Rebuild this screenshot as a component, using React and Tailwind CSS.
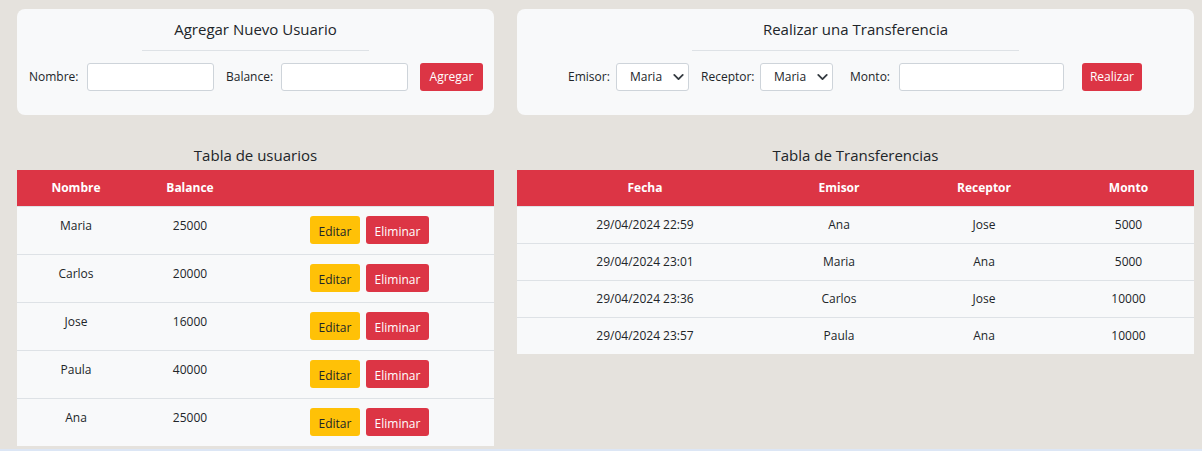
import { ChevronDown } from "lucide-react";

const usuarios = [
  { nombre: "Maria", balance: 25000 },
  { nombre: "Carlos", balance: 20000 },
  { nombre: "Jose", balance: 16000 },
  { nombre: "Paula", balance: 40000 },
  { nombre: "Ana", balance: 25000 },
];

const transferencias = [
  { fecha: "29/04/2024 22:59", emisor: "Ana", receptor: "Jose", monto: 5000 },
  { fecha: "29/04/2024 23:01", emisor: "Maria", receptor: "Ana", monto: 5000 },
  { fecha: "29/04/2024 23:36", emisor: "Carlos", receptor: "Jose", monto: 10000 },
  { fecha: "29/04/2024 23:57", emisor: "Paula", receptor: "Ana", monto: 10000 },
];

function Card({ title, children }) {
  return (
    <div className="h-[106px] rounded-lg bg-[#f8f9fa] px-3 pt-[11px]">
      <h5 className="text-center text-[15px] font-medium leading-[19px]">{title}</h5>
      <div className="mx-auto mt-[11px] h-px w-1/2 bg-[#dee2e6]" />
      <div className="mt-3 flex items-center">{children}</div>
    </div>
  );
}

function Select() {
  return (
    <div className="relative h-[28px] w-[73px] shrink-0">
      <select className="h-full w-full appearance-none rounded-[3px] border border-[#ced4da] bg-white pl-[13px] text-[12px] text-[#212529] outline-none">
        <option>Maria</option>
      </select>
      <ChevronDown
        size={17}
        strokeWidth={2.6}
        className="pointer-events-none absolute right-[2px] top-1/2 -translate-y-1/2 text-[#343a40]"
      />
    </div>
  );
}

export default function App() {
  return (
    <div className="h-[451px] bg-[#dce6f5]">
      <div className="h-[449px] bg-[#e5e2dd] font-['Open_Sans',sans-serif] text-[12px] text-[#212529]">
        <div className="flex gap-[23px] pl-[17px] pt-[9px]">
          {/* left column */}
          <div className="w-[477px]">
            <Card title="Agregar Nuevo Usuario">
              <label className="w-[58px] shrink-0">Nombre:</label>
              <input className="h-[28px] w-[127px] shrink-0 rounded-[3px] border border-[#ced4da] bg-white" />
              <label className="ml-3 w-[55px] shrink-0">Balance:</label>
              <input className="h-[28px] w-[127px] shrink-0 rounded-[3px] border border-[#ced4da] bg-white" />
              <button className="ml-3 h-[28px] w-[63px] shrink-0 rounded-[3px] bg-[#dc3545] text-white">
                Agregar
              </button>
            </Card>

            <h5 className="mb-[5px] mt-[31px] text-center text-[15px] font-medium leading-[19px]">
              Tabla de usuarios
            </h5>
            <div className="grid h-[36px] grid-cols-[118px_110px_249px] items-center bg-[#dc3545] text-center font-bold text-white">
              <div>Nombre</div>
              <div>Balance</div>
              <div />
            </div>
            {usuarios.map((u) => (
              <div
                key={u.nombre}
                className="grid h-[48px] grid-cols-[118px_110px_249px] border-t border-[#dee2e6] bg-[#f8f9fa] text-center"
              >
                <div className="pt-[10px]">{u.nombre}</div>
                <div className="pt-[10px]">{u.balance}</div>
                <div className="flex justify-center gap-[6px] pt-[9px]">
                  <button className="h-[28px] w-[50px] rounded-[3px] bg-[#ffc107] pt-[3px] text-[#212529]">
                    Editar
                  </button>
                  <button className="h-[28px] w-[63px] rounded-[3px] bg-[#dc3545] pt-[3px] text-white">
                    Eliminar
                  </button>
                </div>
              </div>
            ))}
          </div>

          {/* right column */}
          <div className="w-[677px]">
            <Card title="Realizar una Transferencia">
              <label className="w-[87px] shrink-0 pl-[39px]">Emisor:</label>
              <Select />
              <label className="ml-3 w-[59px] shrink-0">Receptor:</label>
              <Select />
              <label className="ml-[17px] w-[49px] shrink-0">Monto:</label>
              <input className="h-[28px] w-[165px] shrink-0 rounded-[3px] border border-[#ced4da] bg-white" />
              <button className="ml-[18px] h-[28px] w-[60px] shrink-0 rounded-[3px] bg-[#dc3545] text-white">
                Realizar
              </button>
            </Card>

            <h5 className="mb-[5px] mt-[31px] text-center text-[15px] font-medium leading-[19px]">
              Tabla de Transferencias
            </h5>
            <div className="grid h-[36px] grid-cols-[256px_132px_158px_131px] items-center bg-[#dc3545] text-center font-bold text-white">
              <div>Fecha</div>
              <div>Emisor</div>
              <div>Receptor</div>
              <div>Monto</div>
            </div>
            {transferencias.map((t) => (
              <div
                key={t.fecha}
                className="grid h-[37px] grid-cols-[256px_132px_158px_131px] items-center border-t border-[#dee2e6] bg-[#f8f9fa] text-center"
              >
                <div>{t.fecha}</div>
                <div>{t.emisor}</div>
                <div>{t.receptor}</div>
                <div>{t.monto}</div>
              </div>
            ))}
          </div>
        </div>
      </div>
    </div>
  );
}
